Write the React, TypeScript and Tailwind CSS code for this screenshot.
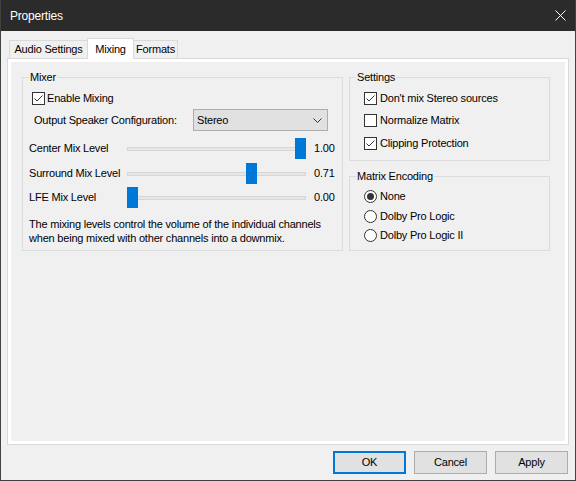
import React from "react";

const font = "font-['Liberation_Sans',Arial,sans-serif]";

function CheckBox({ checked }: { checked: boolean }) {
	return (
		<span className="w-[13px] h-[13px] border border-[#333333] bg-white flex items-center justify-center shrink-0">
			{checked && (
				<svg width="11" height="11" viewBox="0 0 11 11">
					<polyline points="1.5,5.5 4,8 9.5,2.5" fill="none" stroke="#333333" strokeWidth="1" />
				</svg>
			)}
		</span>
	);
}

function Radio({ checked }: { checked: boolean }) {
	return (
		<span className="w-[13px] h-[13px] rounded-full border border-[#333333] bg-white flex items-center justify-center shrink-0">
			{checked && <span className="w-[7px] h-[7px] rounded-full bg-[#333333]" />}
		</span>
	);
}

function Slider({ value }: { value: number }) {
	return (
		<div className="relative w-[179px] h-[21px]">
			<div className="absolute left-0 right-0 top-[9px] h-[4px] bg-[#e7e7e7] border border-[#d6d6d6]" />
			<div className="absolute top-0 w-[11px] h-[21px] bg-[#0078d7]" style={{ left: Math.round(value * 168) }} />
		</div>
	);
}

function GroupBox({ title, className, children }: { title: string; className: string; children: React.ReactNode }) {
	return (
		<div className={`border border-[#dcdcdc] flex flex-col ${className}`}>
			<div className="-mt-[8px] ml-[6px] px-[1px] h-[15px] leading-[15px] bg-[#f0f0f0] w-fit">{title}</div>
			{children}
		</div>
	);
}

const levels = [
	{ label: "Center Mix Level", value: 1, mt: "mt-[7px]" },
	{ label: "Surround Mix Level", value: 0.71, mt: "mt-[4px]" },
	{ label: "LFE Mix Level", value: 0, mt: "mt-[3px]" },
];

export default function App() {
	return (
		<div className={`w-[576px] h-[481px] bg-[#f0f0f0] border-x border-b border-[#414141] flex flex-col text-[11px] tracking-[-0.2px] text-black ${font}`}>
			<div className="h-[31px] shrink-0 bg-[#2b2b2b] flex items-center justify-between pl-[9px] pr-[9px] text-white text-[12px]">
				<span>Properties</span>
				<svg width="11" height="11" viewBox="0 0 11 11">
					<path d="M0.5 0.5 L10.5 10.5 M10.5 0.5 L0.5 10.5" stroke="#ffffff" strokeWidth="1" />
				</svg>
			</div>

			<div className="flex-1 flex flex-col px-[6px] pt-[7px] pb-[6px]">
				<div className="flex items-end h-[20px] ml-[2px]">
					<div className="w-[79px] h-[18px] border border-[#d9d9d9] border-b-0 flex items-center justify-center">Audio Settings</div>
					<div className="relative z-10 -ml-px -mb-px w-[47px] h-[21px] bg-white border border-[#d9d9d9] border-b-0 flex items-center justify-center">Mixing</div>
					<div className="-ml-px w-[45px] h-[18px] border border-[#d9d9d9] border-b-0 flex items-center justify-center">Formats</div>
				</div>

				<div className="flex-1 border border-[#d9d9d9] bg-white p-[3px] flex">
					<div className="flex-1 bg-[#f0f0f0] flex gap-[6px] pl-[11px] pt-[15px] items-start">
						<GroupBox title="Mixer" className="w-[321px] h-[174px]">
							<div className="mt-[6px] ml-[9px] h-[15px] flex items-center gap-[2px]">
								<CheckBox checked />
								<span>Enable Mixing</span>
							</div>
							<div className="mt-[3px] ml-[11px] h-[22px] flex items-center">
								<span className="w-[159px]">Output Speaker Configuration:</span>
								<div className="w-[135px] h-[22px] bg-[#e1e1e1] border border-[#adadad] flex items-center justify-between pl-[3px] pr-[5px]">
									<span>Stereo</span>
									<svg width="9" height="5" viewBox="0 0 9 5">
										<polyline points="0.5,0.5 4.5,4.5 8.5,0.5" fill="none" stroke="#333333" strokeWidth="1" />
									</svg>
								</div>
							</div>
							{levels.map((l) => (
								<div key={l.label} className={`${l.mt} ml-[6px] h-[21px] flex items-center`}>
									<span className="w-[98px]">{l.label}</span>
									<Slider value={l.value} />
									<span className="ml-[8px]">{l.value.toFixed(2)}</span>
								</div>
							))}
							<p className="mt-[9px] ml-[6px] leading-[14px]">
								The mixing levels control the volume of the individual channels
								<br />
								when being mixed with other channels into a downmix.
							</p>
						</GroupBox>

						<div className="flex flex-col">
							<GroupBox title="Settings" className="w-[201px] h-[84px]">
								<div className="mt-[6px] ml-[14px] h-[15px] flex items-center gap-[3px]">
									<CheckBox checked />
									<span>Don't mix Stereo sources</span>
								</div>
								<div className="mt-[7px] ml-[14px] h-[15px] flex items-center gap-[3px]">
									<CheckBox checked={false} />
									<span>Normalize Matrix</span>
								</div>
								<div className="mt-[8px] ml-[14px] h-[15px] flex items-center gap-[3px]">
									<CheckBox checked />
									<span>Clipping Protection</span>
								</div>
							</GroupBox>

							<GroupBox title="Matrix Encoding" className="mt-[15px] w-[201px] h-[75px]">
								<div className="mt-[5px] ml-[14px] h-[15px] flex items-center gap-[3px]">
									<Radio checked />
									<span>None</span>
								</div>
								<div className="mt-[5px] ml-[14px] h-[15px] flex items-center gap-[3px]">
									<Radio checked={false} />
									<span>Dolby Pro Logic</span>
								</div>
								<div className="mt-[4px] ml-[14px] h-[15px] flex items-center gap-[3px]">
									<Radio checked={false} />
									<span>Dolby Pro Logic II</span>
								</div>
							</GroupBox>
						</div>
					</div>
				</div>

				<div className="mt-[6px] mr-[1px] flex justify-end gap-[8px]">
					<button className="w-[73px] h-[23px] bg-[#e1e1e1] border-2 border-[#0078d7]">OK</button>
					<button className="w-[73px] h-[23px] bg-[#e1e1e1] border border-[#adadad]">Cancel</button>
					<button className="w-[73px] h-[23px] bg-[#e1e1e1] border border-[#adadad]">Apply</button>
				</div>
			</div>
		</div>
	);
}
